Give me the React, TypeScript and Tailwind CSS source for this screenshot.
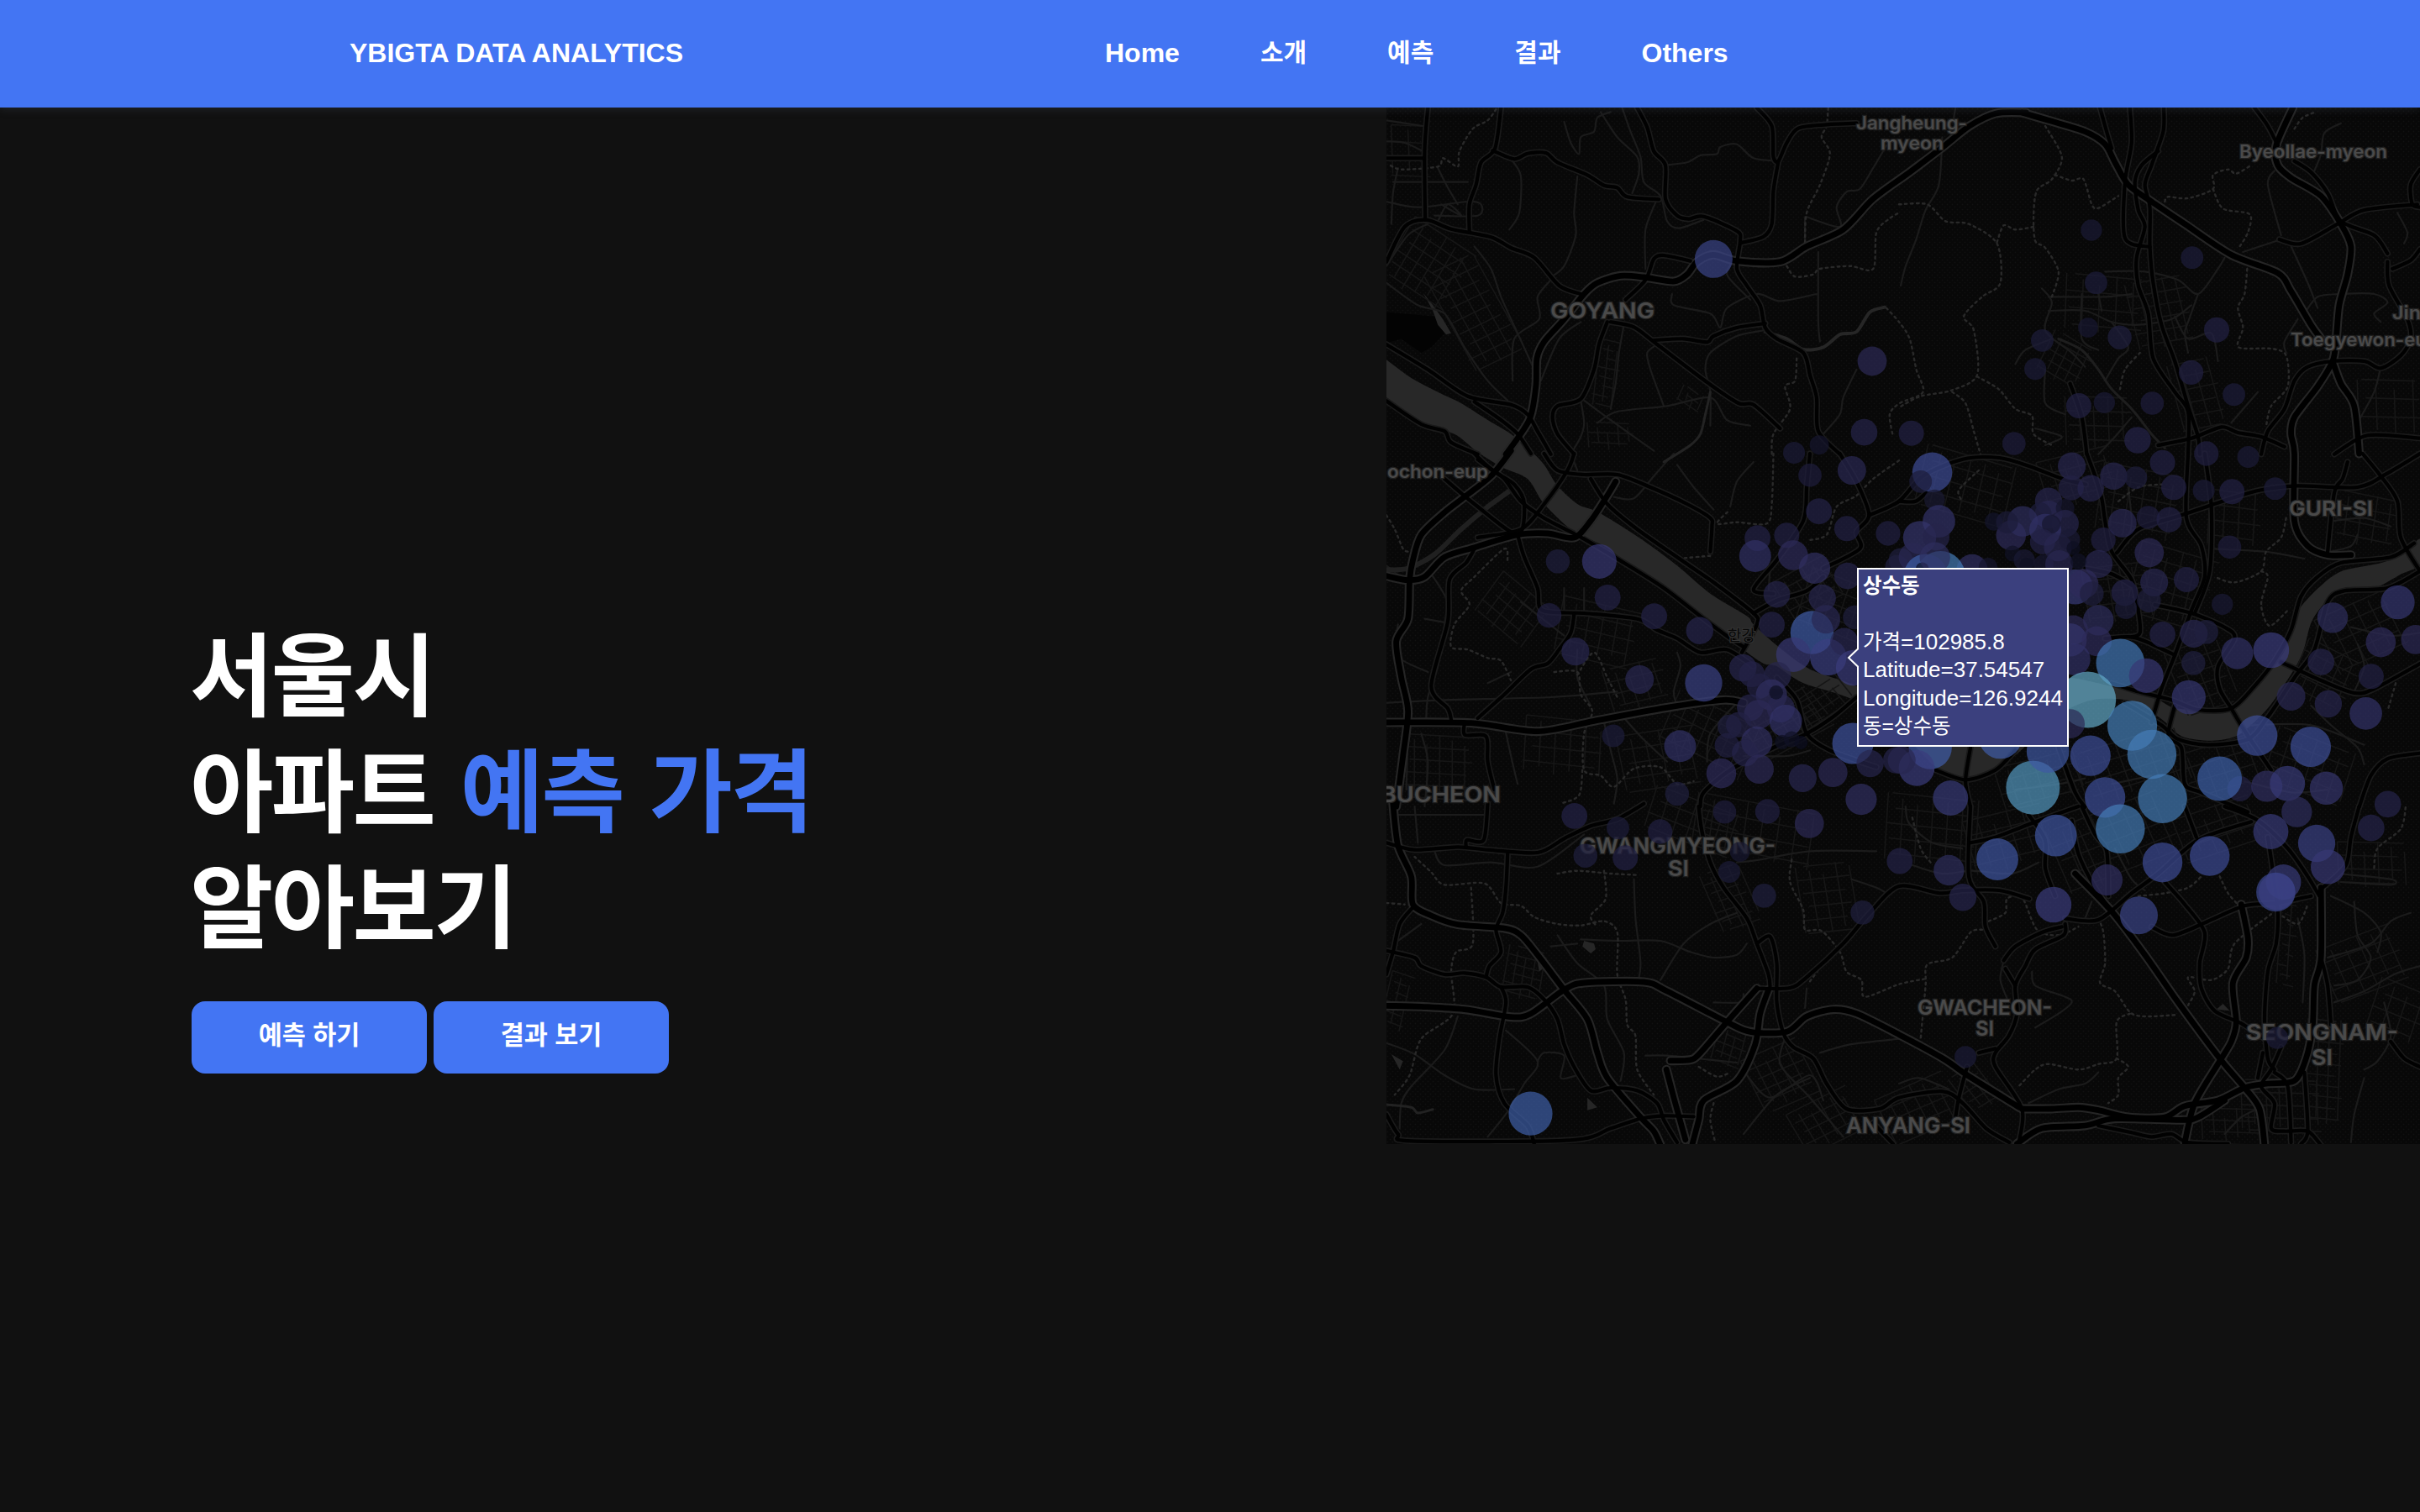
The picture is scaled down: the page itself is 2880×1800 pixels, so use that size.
import React from "react";

/* ---------- map geometry ---------- */

const SX = 2.529;
const SY = 3;
type Sheet = "A" | "B" | "C" | "D" | "E" | "F";
const ORIGIN: Record<Sheet, [number, number]> = {
  A: [0, 0],
  B: [620, 0],
  C: [0, 420],
  D: [620, 420],
  E: [0, 840],
  F: [620, 840],
};

const project = (s: Sheet, x: number, y: number): [number, number] => [
  ORIGIN[s][0] + x / SX - 10,
  ORIGIN[s][1] + y / SY - 8,
];

const parse = (s: Sheet, pts: string) =>
  pts.split(" ").map((p) => {
    const [x, y] = p.split(",").map(Number);
    return project(s, x, y);
  });

const smooth = (s: Sheet, raw: string) => {
  const p = parse(s, raw);
  let d = `M${p[0][0].toFixed(1)} ${p[0][1].toFixed(1)}`;
  for (let i = 0; i < p.length - 1; i++) {
    const a = p[i - 1] ?? p[i];
    const b = p[i];
    const c = p[i + 1];
    const e = p[i + 2] ?? c;
    const k = 7;
    d += `C${(b[0] + (c[0] - a[0]) / k).toFixed(1)} ${(b[1] + (c[1] - a[1]) / k).toFixed(1)} ${(c[0] - (e[0] - b[0]) / k).toFixed(1)} ${(c[1] - (e[1] - b[1]) / k).toFixed(1)} ${c[0].toFixed(1)} ${c[1].toFixed(1)}`;
  }
  return d;
};

type Line = [Sheet, string];

const MOTORWAYS: Line[] = [
  ["A", "385,1262 455,1140 475,1020 478,920 500,860 560,780 620,690 660,650 730,625 800,630 890,645 930,620 960,575 1010,550 1080,572 1210,575 1290,520 1400,460 1490,350 1600,255 1700,165 1780,90 1860,45 1950,42"],
  ["B", "370,42 450,70 560,110 620,155 650,220 690,300 760,360 860,440 1000,550 1140,615 1180,680 1240,800 1270,850"],
  ["B", "1185,25 1135,160 1140,230 1180,275 1270,340 1330,440 1360,520 1350,620 1325,730 1315,860 1305,930 1260,1020 1190,1130 1180,1190 1190,1260 1190,1500 1230,1590 1290,1622 1360,1622"],
  ["B", "1305,930 1330,1010 1370,1090 1385,1260"],
  ["C", "400,-10 340,80 260,155 200,210 130,290 105,380 95,450 90,590 55,670 70,800 90,920 75,1080 55,1260"],
  ["C", "25,437 90,452 140,440 200,370 290,335 420,290 510,285 590,300 640,240 690,150 715,100"],
  ["C", "25,960 280,962 480,992 650,955 880,905 1040,880 1100,890"],
  ["E", "45,-10 60,140 100,250 105,350 160,390 240,422 380,435 430,460 480,530 560,655 630,760 660,880 690,970 790,1110 830,1160 850,1210"],
  ["E", "25,712 130,715 260,725 400,752 460,740 560,655 620,630 800,627 870,660 1050,770 1120,805 1230,805 1290,750 1370,725 1440,740 1568,815 1700,900 1780,965 1930,1075"],
  ["E", "1175,655 1150,740 1135,850 1080,980 980,1050 965,1120 945,1210"],
  ["E", "880,908 940,905 970,880 1050,770 1140,650"],
  ["E", "868,940 890,1040 925,1190"],
  ["F", "530,240 640,375 740,530 840,700 965,900 1040,1005 1085,1080 1100,1210"],
  ["F", "1030,350 1050,470 1045,540 1005,630 1015,770 1000,840 965,910 890,1060 860,1200"],
  ["F", "1270,290 1270,540 1250,640 1245,780 1225,900 1190,980 1110,990 1040,1005 960,1050 860,1070 800,1110 690,1110 600,1085 540,1075 460,1080 370,1080"],
  ["F", "355,1205 430,1150 560,1140 650,1115 850,1120 900,1110 980,1050"],
];

const HIGHWAYS: Line[] = [
  ["A", "150,25 140,180 142,425"],
  ["A", "25,205 135,205"],
  ["A", "370,25 352,170 310,220 295,300 275,370 275,470"],
  ["A", "25,575 80,450 145,425 220,458 340,487 400,525 470,560 545,660 610,690"],
  ["A", "345,178 410,208 450,188 505,186 540,220 630,265 680,302 720,310 750,343 845,352"],
  ["A", "780,25 810,95 830,180 865,230 865,350 900,410 935,422 980,413 1080,465 1090,500 1080,600 1110,660 1150,730 1165,810 1200,850 1280,900 1300,980 1320,1060 1325,1180 1390,1262"],
  ["A", "1140,25 1185,90 1190,200 1205,215 1230,150 1265,98 1350,85 1440,80"],
  ["A", "1205,215 1190,320 1185,440 1160,485 1090,508"],
  ["A", "940,572 860,552 830,565 805,640 745,710"],
  ["A", "690,790 665,870 650,960 610,1065 540,1090 525,1130 540,1190 590,1262"],
  ["A", "700,790 770,808 840,870 990,1005 1085,1080 1130,1085 1210,1170"],
  ["A", "830,855 920,850 990,862 1010,840 1080,810 1165,795"],
  ["A", "25,870 150,960 270,1055 400,1085 450,1120 480,1180 520,1262"],
  ["A", "25,1072 130,1155 200,1180 220,1220 300,1262"],
  ["A", "290,1075 370,1140 420,1190 460,1260"],
  ["B", "605,25 620,90 640,170"],
  ["B", "695,25 700,150 680,290 680,490 755,522"],
  ["B", "797,25 795,110 760,230 740,300 755,380 755,520 765,650 790,800 830,930 870,1090 900,1200 905,1262"],
  ["B", "780,180 730,230 710,290 720,390 740,450 715,560 720,660 750,760 765,920 830,1040 870,1110 870,1262"],
  ["B", "1070,25 1110,90 1140,160"],
  ["B", "1190,215 1240,255 1290,330 1330,430 1430,480 1470,545"],
  ["B", "1145,495 1210,510 1320,440 1400,390 1560,370"],
  ["B", "1568,245 1540,300 1545,370 1568,380"],
  ["B", "1470,575 1475,660 1530,780 1540,850 1510,910 1450,955 1400,930 1305,930 1230,950 1190,1000 1160,1100 1110,1180 1090,1262"],
  ["B", "1485,600 1540,570 1568,530"],
  ["B", "780,1230 880,1205 970,1165 1020,1185 1090,1200 1160,1235"],
  ["B", "1310,1262 1410,1195 1568,1205"],
  ["B", "515,1010 550,1130 565,1262"],
  ["C", "200,90 290,180 420,290 440,180 410,110 350,65 300,20"],
  ["C", "290,0 330,45 380,90 430,170 500,230 620,305 740,390 860,480 980,590 1060,660 1100,690"],
  ["C", "590,0 570,60 500,180 430,270 300,300"],
  ["C", "500,0 540,60 620,75 720,75 820,120 930,180 1000,230 1005,260 1000,350"],
  ["C", "640,90 690,180 780,270 900,370 1010,460 1130,570 1140,610 1095,710"],
  ["C", "420,290 440,370 480,480 495,560 620,570 780,590 840,630 900,660 970,710 1050,700 1130,760"],
  ["C", "590,575 580,640 545,700 510,750 460,770 380,860 300,945"],
  ["C", "290,340 265,390 215,450 210,600 160,830 210,910 220,950"],
  ["C", "260,965 262,1005 325,1010 330,1100 350,1200"],
  ["C", "1300,0 1290,120 1280,240 1200,380 1130,485 1190,500"],
  ["C", "1130,570 1200,525 1290,490 1340,440"],
  ["C", "1390,0 1440,100 1478,220 1440,280 1450,340 1340,410"],
  ["C", "1478,220 1568,170 1640,80 1760,20 1870,15 1960,45 2060,90 2130,110"],
  ["C", "1200,800 1260,880 1290,1000 1360,1060 1500,1120"],
  ["C", "1440,870 1370,940 1290,1000 1190,1050 1060,1130 980,1210 970,1260"],
  ["D", "565,0 590,80 610,160 620,240 640,350 700,450 720,560 725,640 700,655"],
  ["D", "870,0 865,230 910,330 920,440 880,560 830,720 790,840 760,960"],
  ["D", "920,0 940,190 935,420 890,570"],
  ["D", "655,355 720,270 850,220 1000,160 1090,130 1200,115 1380,120 1470,70 1568,0"],
  ["D", "1395,0 1450,80 1500,170 1510,300 1568,420"],
  ["D", "1350,30 1335,90 1310,140 1290,350"],
  ["D", "1550,320 1480,370 1330,390 1260,440 1210,510 1180,630 1130,740 1070,830 1000,910 900,915 820,880 720,850 640,820"],
  ["D", "1568,420 1470,480 1340,490 1290,530 1250,700 1190,800 1110,940 1050,1020 930,1040 840,1020 790,970 680,890"],
  ["D", "770,540 880,570 980,620 1010,660 960,760 965,840 1000,910 1040,990 1120,1130"],
  ["D", "1150,745 1270,810 1370,855 1430,840 1568,750"],
  ["D", "560,410 640,430 700,470"],
  ["D", "620,660 700,655 760,680 830,720"],
  ["D", "830,900 810,1010 850,1050 860,1180 910,1210 1050,1280"],
  ["D", "1568,1070 1470,1090 1420,1150 1385,1262"],
  ["D", "0,170 50,170 90,130"],
  ["D", "215,1050 200,1170 215,1262"],
  ["D", "110,1130 200,1165 290,1130 350,1060"],
  ["D", "480,1050 530,1210 560,1262"],
  ["E", "25,130 110,155 240,145 330,155 480,165 560,115 640,70 720,45 800,-10"],
  ["E", "390,170 385,290 375,380 355,440 370,520 335,570 325,610"],
  ["E", "25,515 110,540 130,570 200,600 260,595 325,610 370,645 450,645 500,690 540,760 560,850 590,930 640,1015 700,1005 780,1015 840,1060 860,1120 900,1200"],
  ["E", "330,-10 318,120 268,120 265,145"],
  ["E", "105,360 65,420 45,520 25,600"],
  ["E", "370,645 385,700 365,830 355,960 380,1060 450,1140 470,1205"],
  ["E", "25,1100 60,1170 100,1195 580,1192 700,1150 790,1115 860,1105 950,1108"],
  ["E", "965,0 975,90 1000,200 1040,290 1110,400 1140,490 1175,600 1180,650"],
  ["E", "1140,650 1240,648 1290,610 1400,490 1480,380 1568,285 1690,310 1760,300 1870,300 1960,330"],
  ["E", "1140,490 1180,465 1200,560 1200,700 1220,810 1250,860 1310,900 1350,990 1410,1080 1510,1080 1568,1040 1700,1018 1760,1060 1830,1150 1900,1200"],
  ["E", "1490,1130 1550,1205"],
  ["F", "215,0 210,250 255,340 260,430 290,500"],
  ["F", "215,130 290,110 400,60 540,0"],
  ["F", "390,30 440,120 440,220 470,320"],
  ["F", "550,0 590,100 625,160 630,320"],
  ["F", "520,50 540,170 590,290 640,375"],
  ["F", "500,400 600,405 700,310 780,240 900,120 1060,55"],
  ["F", "860,0 895,110"],
  ["F", "980,0 1080,50 1170,150 1230,250 1265,320"],
  ["F", "760,430 825,460 930,410 1040,355 1140,345 1240,320"],
  ["F", "800,270 860,350 920,450 905,560 910,650 950,730 1030,775 1100,830"],
  ["F", "1110,110 1125,230 1140,380 1135,490 1110,590 1100,760 1110,900 1130,940"],
  ["F", "1385,0 1360,110 1345,210 1275,290"],
  ["F", "500,420 495,460 410,510 380,570 350,640 355,740 330,820 290,880 290,930 370,1080 360,1205"],
  ["F", "490,430 430,450 350,500 315,550"],
  ["F", "320,580 350,640"],
  ["F", "205,930 180,1040 170,1110"],
  ["F", "290,865 240,880"],
  ["F", "1270,540 1290,640 1300,780"],
  ["F", "1150,860 1120,940 1090,1000 1130,1060 1120,1150 1160,1160 1230,1160 1270,1210"],
  ["F", "1130,950 1170,1000 1180,1200"],
  ["F", "1220,950 1230,1160 1210,1205"],
  ["F", "1095,880 1080,970"],
  ["F", "1480,840 1520,900 1568,930"],
  ["F", "600,1140 700,1165 760,1180 820,1170 870,1200 990,1205"],
];

const STREETS: Line[] = [
  ["A", "735,25 760,110 790,200 800,290 850,340 870,430 905,455 980,425"],
  ["A", "670,40 720,130 780,200 785,260 765,330"],
  ["A", "840,350 805,460 805,600"],
  ["A", "560,75 580,150 605,190 610,130 650,110 660,60 700,40"],
  ["A", "600,270 590,400 595,480 560,590 520,630"],
  ["A", "405,215 430,270 425,400 395,460"],
  ["A", "865,230 930,220 970,195 1020,190 1030,165 1080,155 1130,205 1205,215"],
  ["A", "1290,415 1390,450 1380,380 1410,325 1450,315 1490,240 1530,160"],
  ["A", "1285,415 1285,510"],
  ["A", "1080,560 1050,620 1120,710"],
  ["A", "885,690 890,730 1000,760 1030,810 1050,740 1140,690 1210,715 1320,690"],
  ["A", "1325,540 1325,790 1330,860"],
  ["A", "1000,1160 1000,1040 985,960 1000,900 1080,840 1160,820"],
  ["A", "520,640 480,700 485,780 410,850 405,1000"],
  ["A", "610,790 545,850 490,1000"],
  ["A", "740,800 725,900 715,1010 700,1100"],
  ["A", "610,1070 620,1150 610,1200 580,1262"],
  ["A", "620,1070 700,1140 830,1250"],
  ["A", "660,1150 720,1110 870,1090 1000,1060 1050,1140 1120,1160"],
  ["A", "860,1090 820,960 810,900 840,870"],
  ["A", "1440,960 1400,1060 1390,1120 1340,1190"],
  ["A", "25,590 90,480 150,440"],
  ["A", "180,240 210,310 240,370"],
  ["A", "60,240 45,330 40,440"],
  ["A", "25,145 80,150 135,180"],
  ["A", "25,70 135,90"],
  ["A", "45,290 270,290"],
  ["A", "25,360 120,380 270,360 310,370 300,410 170,410"],
  ["A", "180,430 210,370 250,410 190,370"],
  ["A", "290,520 340,600 370,700 420,830 470,960"],
  ["A", "25,650 120,730 200,760 260,880 330,1000 390,1070"],
  ["B", "130,130 120,300 80,390 50,500 20,590 5,660"],
  ["B", "1130,250 1110,300 1150,480"],
  ["B", "1035,540 1150,495"],
  ["B", "1180,520 1230,650 1260,740"],
  ["B", "620,610 740,610 840,640 900,690 960,600 980,560"],
  ["B", "450,750 560,750 640,790 720,800 820,780 880,730"],
  ["B", "450,700 620,700 700,690"],
  ["B", "430,670 460,720 440,820 520,900 560,950"],
  ["B", "350,940 380,890 460,850"],
  ["B", "550,690 550,850 600,890"],
  ["B", "600,690 610,750"],
  ["B", "640,790 690,880 660,920 620,1000"],
  ["B", "900,690 870,790 860,830 870,900"],
  ["B", "830,770 870,850 940,830 960,930"],
  ["B", "1080,1040 1000,1150"],
  ["B", "1220,760 1260,700 1330,690 1430,690 1470,720 1430,760 1450,790"],
  ["B", "1200,780 1160,860 1165,900"],
  ["B", "1450,950 1430,1040 1380,1150"],
  ["B", "440,960 440,1080 500,1120"],
  ["B", "410,1170 490,1200 440,1230"],
  ["B", "700,1130 650,1200 600,1262"],
  ["B", "1500,400 1530,470 1520,510"],
  ["B", "170,25 165,60"],
  ["B", "1330,80 1280,115 1270,190 1250,250"],
  ["C", "580,0 600,60"],
  ["C", "140,590 210,605"],
  ["C", "60,610 55,720 150,780"],
  ["C", "330,820 400,780"],
  ["C", "100,470 25,400"],
  ["C", "160,430 205,520 200,610 180,760 150,870 145,950"],
  ["C", "430,530 560,650"],
  ["C", "600,700 600,800 640,900"],
  ["C", "25,890 200,880 520,870 720,850"],
  ["C", "620,480 620,560"],
  ["C", "560,480 560,560"],
  ["C", "900,710 910,760 890,850 900,900"],
  ["C", "380,970 400,1080 420,1180"],
  ["C", "680,960 700,1060 720,1160 710,1250"],
  ["C", "90,1000 85,1200"],
  ["C", "130,1000 150,1100 140,1260"],
  ["C", "900,40 950,120 1010,200"],
  ["C", "890,0 830,80 770,160 710,155"],
  ["C", "1130,30 1080,100 1060,190"],
  ["C", "1180,400 1175,500"],
  ["C", "1080,890 1000,1000 990,1100"],
  ["C", "1100,1080 1230,1080 1300,1060"],
  ["C", "730,930 790,1010 870,1100"],
  ["D", "950,340 1100,350 1220,375"],
  ["D", "1380,290 1360,330 1300,350"],
  ["D", "690,120 700,240 690,320"],
  ["D", "1310,240 1400,230 1480,260"],
  ["D", "1060,970 1240,970 1400,1040"],
  ["D", "1240,900 1300,970 1380,1050 1400,1110"],
  ["D", "1568,640 1480,650 1360,620"],
  ["D", "1380,680 1400,760 1370,850"],
  ["D", "350,1200 480,1180 560,1160"],
  ["D", "640,1180 760,1150"],
  ["D", "1040,1170 1180,1210 1290,1200"],
  ["E", "60,30 320,30"],
  ["E", "110,0 120,130"],
  ["E", "170,160 200,210 340,200 480,215 620,100"],
  ["E", "610,475 730,480 850,480 940,520 1010,540 1080,530 1110,490"],
  ["E", "850,620 920,490 1000,420 1080,380"],
  ["E", "540,460 600,560 680,640 690,760 740,880 730,980"],
  ["E", "770,260 775,400 790,560 780,640"],
  ["E", "520,500 600,490"],
  ["E", "25,845 110,885 200,960 290,1010 410,1010"],
  ["E", "240,750 200,870 100,1000 70,1060 65,1150"],
  ["E", "385,800 480,910 440,990 390,1090 330,1180"],
  ["E", "480,910 500,880 560,890 550,970 600,960"],
  ["E", "805,890 870,890 1000,905 1080,915"],
  ["E", "1080,200 1150,190 1300,160 1500,160"],
  ["E", "1290,650 1285,720"],
  ["E", "1110,960 1180,1040 1300,960 1340,1050"],
  ["E", "1100,1170 1200,1030 1300,970"],
  ["E", "1330,880 1420,850 1568,830"],
  ["E", "1425,260 1500,290 1530,310"],
  ["E", "1230,810 1210,920 1300,1040 1400,1180"],
  ["E", "130,420 60,480"],
  ["E", "1010,700 1090,700 1100,670"],
  ["F", "20,0 30,60 100,130 190,150"],
  ["F", "40,210 130,240 220,230 340,240 420,200"],
  ["F", "560,400 580,340"],
  ["F", "400,590 410,640 500,680 520,700 480,740 410,790"],
  ["F", "315,550 305,620 330,700"],
  ["F", "1370,340 1380,460 1420,540 1380,620 1310,640"],
  ["F", "1290,540 1420,490 1480,410 1540,380"],
  ["F", "1310,700 1400,660 1490,600 1568,570"],
  ["F", "1320,240 1480,260 1480,280 1330,270"],
  ["F", "1200,400 1220,530 1215,700"],
  ["F", "390,1060 480,1010 560,990 600,950"],
  ["F", "0,990 60,970 150,1010"],
  ["F", "1300,320 1400,380 1450,450 1440,520"],
  ["F", "1400,970 1370,1100 1360,1200"],
  ["F", "980,1170 1030,1110 1080,1080"],
  ["F", "1460,700 1480,820 1440,910 1400,940"],
  ["F", "650,150 700,260 740,300"],
];

const BOUNDARIES: Line[] = [
  ["A", "355,30 330,70 285,100 245,180 240,235 195,205 180,235 70,245 30,225"],
  ["A", "1355,25 1350,90 1335,130 1360,190 1330,300 1290,400 1285,510"],
  ["A", "1230,590 1255,628 1310,620 1330,600 1420,590 1490,600 1500,470 1540,420 1568,400"],
  ["A", "1530,740 1568,790 1600,850 1620,960 1640,1040 1570,1080 1540,1120 1550,1200"],
  ["A", "1260,920 1255,1000 1225,1020 1240,1100 1190,1190 1185,1262"],
  ["B", "0,370 85,370 140,430 210,440 295,510 305,650 250,700 195,770 225,820 235,980 155,1035 65,1055 0,1095"],
  ["B", "440,90 490,200 460,280 415,320 405,410 410,500 440,525 480,610 460,700"],
  ["B", "295,505 315,445 350,460 405,450"],
  ["B", "470,265 520,285 555,280 580,370 600,383 660,340"],
  ["B", "800,360 810,343 870,348 945,315 945,265 990,245 1015,260 1060,230"],
  ["B", "945,315 975,385 1055,405 1050,470 1020,530"],
  ["B", "1048,600 1040,690 1020,740 1035,810 1022,880 1120,885 1165,910 1170,1020 1120,1090 1105,1160"],
  ["B", "235,985 300,1030 350,1100 400,1125 405,1190 460,1230"],
  ["B", "160,1040 200,1080 225,1180 245,1262"],
  ["B", "725,900 680,960 665,1030"],
  ["B", "1190,100 1215,60 1255,40"],
  ["C", "25,220 50,270 75,340 90,350"],
  ["C", "390,380 380,340 290,440 250,490 275,540 230,610 220,690 270,700 330,730 370,740 400,810"],
  ["C", "1190,0 1185,180 1170,250 1080,245 1020,250 1060,200"],
  ["C", "905,375 1000,365"],
  ["C", "530,780 600,780 610,860 645,920 620,1000 620,1130 670,1150 710,1190 770,1125 850,1120 900,1180 950,1170"],
  ["C", "600,790 650,710 690,800 720,870"],
  ["C", "615,1130 605,1220 550,1250"],
  ["C", "1568,25 1490,90 1440,150 1380,190 1350,290 1290,310"],
  ["D", "1165,230 1150,300 1105,350 1090,420 1010,460 950,440"],
  ["D", "1090,420 1110,440 1090,540 1115,615 1170,560"],
  ["D", "1495,820 1470,920"],
  ["D", "660,170 720,120 790,110"],
  ["D", "240,60 180,130 190,170"],
  ["E", "110,180 160,235 200,280 320,275 370,345 430,355 470,395 540,420 610,425 680,410 720,450 720,600 745,690 750,780 775,820 780,940 830,1030"],
  ["E", "280,290 285,490 235,520 220,590 225,740 130,830 95,960 50,1030"],
  ["E", "680,230 685,330 640,390 660,430"],
  ["E", "25,345 80,350"],
  ["E", "540,240 600,230 700,240 780,245"],
  ["E", "1245,190 1240,270 1280,370 1285,440 1335,445 1390,520 1410,590 1455,620 1465,680 1568,635 1650,615"],
  ["E", "1300,625 1340,560"],
  ["E", "1010,1060 1000,1120 1015,1200"],
  ["E", "965,930 1020,965 1060,950"],
  ["F", "40,40 65,150 95,200"],
  ["F", "270,410 320,380 325,330 370,325 415,440 480,460 540,430"],
  ["F", "250,440 215,450 160,540 85,565 80,640 65,830"],
  ["F", "600,400 615,450 620,560 605,630 650,660 695,735 740,750 830,745"],
  ["F", "695,740 655,770 655,900 600,920 540,940 450,920 410,940 360,1000"],
  ["F", "655,900 690,930 660,970 660,1030 630,1060"],
  ["F", "720,320 800,310 870,290 910,250"],
  ["F", "1120,385 1010,490 990,580 940,620 870,610 890,660 870,710"],
  ["F", "965,250 990,310 1020,350"],
  ["F", "1430,220 1440,150 1510,80 1525,0"],
  ["F", "1140,380 1200,420 1230,350"],
];

const RIVER =
  "25,925 100,990 180,1040 250,1080 330,1140 400,1190 460,1250 500,1300 540,1375 600,1440 655,1465 720,1510 810,1580 900,1660 1000,1760 1110,1840 1130,1870 1200,1945 1300,2030 1440,2090 1600,2190 1700,2225 1850,2190 1990,2080 2080,2060 2220,2095 2340,2135 2400,2170 2500,2175 2560,2180 2640,2090 2715,1990 2755,1890 2770,1820 2830,1740 2900,1680 3020,1650 3090,1615 3136,1565 3136,1655 3080,1690 3000,1740 2910,1750 2860,1780 2810,1860 2780,1980 2720,2100 2670,2180 2590,2265 2510,2285 2420,2270 2360,2210 2270,2145 2150,2140 2040,2200 1910,2345 1770,2425 1690,2390 1600,2290 1440,2145 1280,2080 1200,2020 1160,2010 1100,1960 1060,1910 1000,1880 950,1820 870,1750 760,1660 680,1590 590,1540 500,1440 450,1350 375,1310 300,1255 230,1190 130,1155 60,1090 25,1060";

const WATER: Line[] = [
  ["A", "135,685 165,730 195,780 220,830 205,835 180,800 165,750"],
  ["E", "620,480 650,490 655,510 640,525 615,500"],
  ["E", "630,1040 660,1075 630,1085"],
  ["E", "480,555 500,575 485,590"],
  ["E", "40,885 75,910 65,940"],
  ["F", "975,705 995,730 955,725"],
];

const DARK: Line[] = [
  ["A", "25,755 170,770 200,830 160,880 130,900 70,850 25,865"],
];

// Dense street blocks: sheet, centre x/y, half width/height, angle, step
const GRIDS: [Sheet, number, number, number, number, number, number][] = [
  ["A", 150, 590, 55, 60, 32, 15],
  ["A", 290, 760, 40, 95, -28, 16],
  ["A", 100, 180, 30, 45, 0, 20],
  ["A", 690, 980, 18, 60, 8, 11],
  ["A", 940, 1070, 20, 18, 30, 9],
  ["A", 700, 1200, 35, 25, 0, 12],
  ["C", 180, 1120, 55, 55, 2, 15],
  ["C", 660, 640, 60, 50, 12, 17],
  ["C", 400, 560, 45, 45, 38, 14],
  ["C", 780, 830, 45, 40, -15, 15],
  ["C", 1000, 1010, 70, 50, 25, 15],
  ["C", 1230, 960, 60, 40, -30, 14],
  ["C", 1330, 900, 45, 30, -35, 12],
  ["C", 1380, 560, 55, 55, 20, 16],
  ["C", 560, 1050, 60, 50, 5, 18],
  ["C", 850, 1090, 60, 50, -10, 17],
  ["C", 1300, 480, 45, 40, -30, 13],
  ["D", 720, 180, 60, 60, 10, 17],
  ["D", 540, 90, 55, 45, -15, 16],
  ["D", 820, 480, 60, 65, 15, 17],
  ["D", 660, 500, 50, 50, -8, 15],
  ["D", 1010, 240, 40, 50, 5, 18],
  ["D", 1400, 640, 60, 55, -25, 17],
  ["D", 1400, 240, 50, 45, 10, 17],
  ["D", 1280, 800, 45, 50, 25, 15],
  ["D", 700, 1120, 80, 50, -18, 18],
  ["D", 420, 1170, 60, 40, -15, 16],
  ["D", 960, 1130, 60, 45, -18, 18],
  ["D", 1230, 1120, 60, 50, 20, 16],
  ["D", 200, 120, 70, 55, 15, 18],
  ["D", 910, 800, 40, 60, -20, 16],
  ["B", 790, 760, 45, 60, -12, 15],
  ["B", 620, 730, 60, 50, 4, 20],
  ["B", 500, 930, 35, 40, 28, 12],
  ["B", 900, 1050, 35, 60, -14, 16],
  ["B", 1480, 1100, 50, 50, 0, 22],
  ["B", 600, 1150, 50, 45, 0, 17],
  ["E", 440, 600, 30, 45, 12, 11],
  ["E", 950, 60, 70, 40, 20, 17],
  ["E", 1060, 330, 30, 55, -22, 12],
  ["E", 1130, 90, 90, 50, 10, 20],
  ["E", 1350, 330, 40, 60, -8, 16],
  ["E", 1060, 860, 25, 35, 18, 11],
  ["E", 1210, 960, 45, 50, -25, 14],
  ["E", 1350, 1120, 50, 40, -28, 14],
  ["E", 60, 700, 20, 50, 15, 12],
  ["F", 100, 90, 70, 60, 5, 18],
  ["F", 650, 130, 90, 60, -22, 19],
  ["F", 330, 120, 60, 50, -15, 18],
  ["F", 960, 80, 60, 40, -20, 18],
  ["F", 1170, 480, 14, 80, 5, 12],
  ["F", 1400, 560, 60, 50, -22, 17],
  ["F", 1420, 210, 50, 40, 0, 16],
  ["F", 1150, 1070, 60, 45, 0, 15],
  ["F", 1000, 1140, 45, 30, 0, 14],
  ["F", 1280, 950, 28, 90, 3, 13],
  ["F", 1500, 740, 40, 50, 20, 18],
  ["F", 60, 1080, 55, 45, -25, 15],
  ["F", 230, 1010, 25, 40, -35, 12],
];

const gridPath = (hw: number, hh: number, step: number) => {
  let d = "";
  let n = 0;
  for (let x = -hw; x <= hw; x += step) {
    const j = (n++ % 3) * 6;
    d += `M${x} ${-hh + j}L${x + 2} ${hh - ((n * 5) % 13)}`;
  }
  for (let y = -hh; y <= hh; y += step) {
    const j = (n++ % 3) * 5;
    d += `M${-hw + j} ${y}L${hw - ((n * 7) % 12)} ${y + 2}`;
  }
  return d;
};

/* ---------- data points: centre x, centre y, radius ---------- */

const POINTS: Record<Sheet, number[][]> = {
  A: [[1010, 565, 57], [1487, 930, 44], [1463, 1184, 40], [1252, 1257, 33], [1328, 1229, 29]],
  B: [
    [579, 462, 32], [882, 560, 34], [593, 650, 34], [569, 810, 30], [664, 845, 36], [956, 818, 38], [431, 856, 34],
    [410, 958, 33], [879, 970, 37], [1008, 1049, 34], [541, 1089, 38], [618, 1078, 32], [762, 1080, 35], [37, 1187, 38],
    [346, 1224, 35], [718, 1212, 40],
  ],
  C: [
    [1300, 77, 35], [1426, 60, 43], [1327, 206, 39], [1411, 268, 38], [1535, 285, 37], [1142, 302, 39], [1230, 292, 38],
    [1135, 366, 48], [1249, 363, 45], [1314, 409, 47], [1413, 437, 40], [541, 385, 36], [666, 385, 52], [691, 514, 39],
    [515, 578, 37], [831, 581, 39], [968, 632, 41], [594, 707, 42], [787, 807, 43], [980, 819, 56], [1200, 503, 40],
    [1337, 516, 41], [1185, 611, 39], [1306, 639, 65], [1348, 592, 43], [1250, 718, 52], [1355, 727, 55], [1403, 672, 42],
    [1432, 765, 54], [1435, 585, 36], [1098, 765, 41], [1125, 788, 39], [1202, 793, 41], [1148, 830, 38], [1184, 862, 47],
    [1120, 907, 40], [1212, 910, 42], [1145, 932, 44], [1198, 853, 21], [1227, 955, 49], [1058, 975, 36], [1085, 968, 38],
    [1050, 1042, 37], [1140, 1030, 47], [1105, 1070, 40], [1147, 1127, 44], [1033, 1142, 45], [909, 1045, 48],
    [708, 1008, 34], [900, 1215, 36], [1278, 1159, 42], [1369, 1139, 44], [1429, 1035, 62], [1481, 1107, 41],
    [1560, 1095, 40], [1454, 1235, 47], [1216, 1030, 22], [1245, 1020, 24], [1273, 1032, 20], [1562, 405, 36],
  ],
  D: [
    [100, 67, 60], [65, 100, 34], [107, 165, 31], [120, 242, 49], [62, 300, 50], [112, 298, 40], [520, 45, 42],
    [646, 80, 41], [713, 86, 34], [793, 32, 38], [925, 0, 37], [1051, 12, 33], [827, 121, 38], [917, 132, 33],
    [1002, 136, 38], [1132, 125, 34], [518, 122, 38], [577, 124, 40], [450, 170, 41], [450, 218, 42], [500, 195, 28],
    [425, 215, 34], [337, 292, 45], [372, 242, 46], [285, 243, 27], [325, 245, 33], [500, 250, 41],
    [440, 272, 48], [458, 252, 28], [432, 315, 38], [478, 335, 42], [513, 307, 32], [525, 338, 21], [615, 308, 37],
    [672, 248, 43], [750, 228, 35], [813, 236, 38], [753, 354, 44], [995, 334, 35], [601, 394, 42], [768, 460, 42],
    [865, 450, 38], [679, 497, 40], [752, 524, 36], [683, 552, 33], [973, 538, 32], [600, 595, 46], [530, 476, 53],
    [555, 465, 45], [580, 500, 36], [342, 357, 24], [377, 380, 32], [385, 398, 22], [435, 396, 30],
    [482, 395, 42], [540, 385, 24], [5, 380, 36], [42, 370, 43], [220, 415, 47], [268, 405, 28], [125, 436, 74],
    [80, 437, 66], [70, 412, 20], [108, 371, 46], [525, 630, 44], [515, 665, 50], [595, 670, 45],
    [528, 735, 48], [666, 748, 73], [744, 793, 52], [568, 879, 85], [515, 965, 44], [702, 972, 75], [761, 1074, 74],
    [872, 870, 51], [793, 646, 39], [887, 643, 42], [925, 637, 36], [886, 748, 36], [1018, 713, 48], [1120, 702, 54],
    [1180, 867, 43], [1270, 744, 40], [1305, 586, 46], [1501, 531, 51], [1450, 674, 45], [1555, 664, 44],
    [1421, 796, 38], [1292, 894, 41], [1405, 928, 49], [1078, 1007, 61], [1239, 1047, 61], [1026, 1197, 38],
    [965, 1161, 67], [1107, 1188, 47], [1169, 1178, 53], [1286, 1195, 50], [1197, 1280, 46], [1471, 1252, 40],
    [576, 1079, 61], [403, 1193, 81], [448, 1064, 64], [620, 1228, 61], [793, 1232, 74], [666, 1340, 74],
    [94, 1050, 65], [53, 1123, 54], [305, 1013, 65], [155, 1230, 53], [8, 1095, 42],
  ],
  E: [
    [591, 34, 39], [722, 77, 34], [849, 90, 37], [1043, 20, 35], [1172, 18, 37], [1298, 61, 44], [1089, 162, 30],
    [1057, 234, 33], [624, 176, 36], [744, 184, 38], [1162, 319, 36], [1458, 379, 36], [1570, 195, 39], [459, 1097, 66],
  ],
  F: [
    [296, 189, 63], [472, 104, 63], [150, 228, 46], [192, 325, 41], [626, 263, 47], [465, 351, 54], [793, 200, 60],
    [935, 177, 60], [722, 389, 57], [1119, 90, 53], [1257, 132, 56], [1291, 216, 52], [1421, 77, 40], [1157, 270, 53],
    [1134, 306, 59], [1137, 305, 55], [200, 895, 33], [1138, 827, 33],
  ],
};

const SCALE = [
  [3, 5, 18], [25, 25, 51], [44, 42, 87], [58, 60, 125], [62, 83, 160], [62, 109, 178],
  [72, 134, 187], [89, 159, 196], [114, 184, 205], [149, 207, 216], [192, 229, 232], [234, 252, 253],
];

const colorFor = (r: number) => {
  const t = Math.min(1, (r * r) / 1680) * (SCALE.length - 1);
  const i = Math.min(SCALE.length - 2, Math.floor(t));
  const c = SCALE[i].map((v, k) => Math.round(v + (SCALE[i + 1][k] - v) * (t - i)));
  return `rgb(${c.join(",")})`;
};

/* text, left, baseline, width, font size (map pixels) */
const LABELS: [string, number, number, number, number][] = [
  ["GOYANG", 195, 251, 124, 26],
  ["Jangheung-", 559, 26, 132, 21],
  ["myeon", 588, 50, 75, 21],
  ["Byeollae-myeon", 1015, 60, 176, 21],
  ["Jin", 1197, 252, 34, 21],
  ["Toegyewon-eu", 1076, 284, 162, 21],
  ["ochon-eup", 1, 441, 120, 21],
  ["GURI-SI", 1074, 486, 100, 24],
  ["BUCHEON", -7, 827, 143, 26],
  ["GWANGMYEONG-", 230, 888, 233, 25],
  ["SI", 335, 915, 25, 25],
  ["GWACHEON-", 632, 1080, 160, 24],
  ["SI", 701, 1105, 22, 24],
  ["SEONGNAM-", 1023, 1110, 181, 26],
  ["SI", 1101, 1140, 25, 26],
  ["ANYANG-SI", 547, 1221, 148, 25],
];

function SeoulMap() {
  return (
    <svg viewBox="0 0 1230 1234" className="block h-[1234px] w-[1230px] bg-[#080808]">
      <defs>
        <pattern id="park" width="6" height="6" patternUnits="userSpaceOnUse">
          <circle cx="1.5" cy="1.5" r="0.8" fill="#111" />
          <circle cx="4.5" cy="4.5" r="0.8" fill="#111" />
        </pattern>
      </defs>
      <rect width="1230" height="1234" fill="url(#park)" />
      {DARK.map(([s, p], i) => (
        <polygon key={i} points={parse(s, p).join(" ")} fill="#030303" />
      ))}
      <path d={smooth("A", RIVER) + "Z"} fill="#282828" />
      {WATER.map(([s, p], i) => (
        <polygon key={i} points={parse(s, p).join(" ")} fill="#262626" />
      ))}
      <g fill="none" stroke="#161616" strokeWidth="1.6">
        {GRIDS.map(([s, x, y, hw, hh, a, step], i) => (
          <path key={i} d={gridPath(hw * 0.8, hh * 0.7, step)} transform={`translate(${project(s, x, y).join(" ")}) rotate(${a})`} />
        ))}
      </g>
      <g fill="none" strokeLinecap="round" strokeLinejoin="round">
        {STREETS.map(([s, p], i) => (
          <path key={i} d={smooth(s, p)} stroke="#1b1b1b" strokeWidth="2.2" />
        ))}
        {BOUNDARIES.map(([s, p], i) => (
          <path key={i} d={smooth(s, p)} stroke="#292929" strokeWidth="2.4" strokeDasharray="2.5 4.5" />
        ))}
        <path d={smooth("A", "860,1290 940,1230 970,1190 985,1120 1000,1040")} stroke="#232323" strokeWidth="3" />
        <path d={smooth("A", "1165,825 1230,850 1280,888 1340,880 1390,835 1440,825 1480,755 1525,737")} stroke="#262626" strokeWidth="4" />
        <path d={smooth("C", "25,415 90,410 170,360 250,270 330,190 400,130")} stroke="#202020" strokeWidth="6" />
        <path d={smooth("B", "480,850 550,890 600,960 640,1030 700,1100 760,1190 800,1240")} stroke="#1e1e1e" strokeWidth="3" />
        <path d={smooth("E", "25,1065 100,1075 120,1095 165,1082")} stroke="#222" strokeWidth="3" />
        {HIGHWAYS.map(([s, p], i) => (
          <path key={i} d={smooth(s, p)} stroke="#1a1a1a" strokeWidth="7.5" />
        ))}
        {MOTORWAYS.map(([s, p], i) => (
          <path key={i} d={smooth(s, p)} stroke="#252525" strokeWidth="11" />
        ))}
        {HIGHWAYS.map(([s, p], i) => (
          <path key={i} d={smooth(s, p)} stroke="#010101" strokeWidth="4.2" />
        ))}
        {MOTORWAYS.map(([s, p], i) => (
          <path key={i} d={smooth(s, p)} stroke="#000" strokeWidth="6.8" />
        ))}
      </g>
      <g className="font-['Inter'] font-semibold" fill="#4a4a4a" stroke="#202020" strokeWidth="2.5" paintOrder="stroke">
        {LABELS.map(([t, x, y, w, f], i) => (
          <text key={i} x={x} y={y} fontSize={f} textLength={w} lengthAdjust="spacingAndGlyphs">
            {t}
          </text>
        ))}
      </g>
      <text x="406" y="635" fontSize="18" fill="#080808" stroke="#333" strokeWidth="2" paintOrder="stroke" className="font-['Noto_Sans_CJK_KR']">
        한강
      </text>
      {(Object.keys(POINTS) as Sheet[]).flatMap((s) =>
        POINTS[s].map(([x, y, r], i) => {
          const [cx, cy] = project(s, x, y);
          return <circle key={s + i} cx={cx} cy={cy} r={r / SX} fill={colorFor(r / SX)} fillOpacity="0.7" />;
        }),
      )}
    </svg>
  );
}

function Tooltip() {
  return (
    <div className="absolute top-[548px] left-[560px] h-[213px] w-[252px] border-2 border-white bg-[#3b407e] pl-[5px] font-['Liberation_Sans','Noto_Sans_CJK_KR',sans-serif] text-[26px] leading-[34px] whitespace-nowrap text-white">
      <svg viewBox="0 0 14 26" className="absolute top-[92px] -left-[14px] h-[26px] w-[14px]">
        <path d="M14 1.5L2 13L14 24.5" fill="#3b407e" stroke="#fff" strokeWidth="2" />
      </svg>
      <p className="mt-[3px] h-[32px] text-[24.5px] font-bold">상수동</p>
      <p>&nbsp;</p>
      <p className="h-[33px]"><span className="text-[24.5px]">가격</span>=102985.8</p>
      <p>Latitude=37.54547</p>
      <p>Longitude=126.9244</p>
      <p className="text-[24.5px]">동=상수동</p>
    </div>
  );
}

export default function App() {
  return (
    <div className="flex h-[1800px] w-[2880px] flex-col overflow-hidden bg-[#111] font-['Liberation_Sans','Noto_Sans_CJK_KR',sans-serif] text-white">
      <header className="relative z-10 flex h-32 shrink-0 items-center bg-[#4375f3] pl-[416px] text-[32px] leading-none font-bold whitespace-nowrap shadow-[0_2px_10px_rgba(60,70,80,0.35)]">
        <span className="w-[899px] pb-[3px]">YBIGTA DATA ANALYTICS</span>
        <nav className="flex items-center gap-24 pb-[3px]">
          <a>Home</a>
          <a className="text-[30px]">소개</a>
          <a className="text-[30px]">예측</a>
          <a className="text-[30px]">결과</a>
          <a>Others</a>
        </nav>
      </header>
      <main className="flex">
        <section className="w-[1650px] shrink-0 pt-[610px] pl-[226px]">
          <h1 className="text-[108px] leading-[138px] font-bold tracking-[-2.6px] whitespace-nowrap [word-spacing:4px]">
            서울시
            <br />
            아파트 <span className="text-[#4375f3]">예측 가격</span>
            <br />
            알아보기
          </h1>
          <div className="mt-[40px] ml-[2px] flex gap-2 text-[30.5px] font-bold">
            <button className="h-[86px] w-[280px] rounded-2xl bg-[#4375f3] pb-[4px]">예측 하기</button>
            <button className="h-[86px] w-[280px] rounded-2xl bg-[#4375f3] pb-[4px]">결과 보기</button>
          </div>
        </section>
        <section className="relative h-[1234px] w-[1230px]">
          <SeoulMap />
          <Tooltip />
        </section>
      </main>
    </div>
  );
}
